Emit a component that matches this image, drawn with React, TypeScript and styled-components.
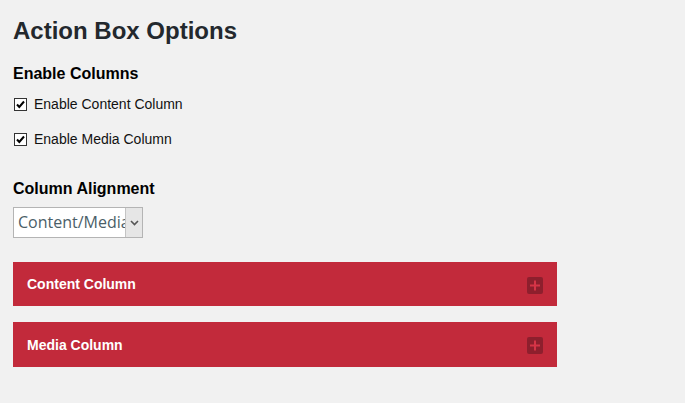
import {useState} from 'react';
import styled, {createGlobalStyle} from 'styled-components';

const GlobalStyle = createGlobalStyle`
  html, body {
    margin: 0;
    padding: 0;
    background: #f1f1f1;
  }
  body {
    font-family: "Liberation Sans", Arial, sans-serif;
    color: #23282d;
  }
`;

function App() {
    const [content, setContent] = useState(true);
    const [media, setMedia] = useState(true);

    return (
        <>
            <GlobalStyle/>
            <Page>
                <Title>Action Box Options</Title>

                <SectionTitle>Enable Columns</SectionTitle>
                <CheckRow>
                    <Check type="checkbox" checked={content} onChange={() => setContent(!content)}/>
                    <CheckLabel>Enable Content Column</CheckLabel>
                </CheckRow>
                <CheckRow>
                    <Check type="checkbox" checked={media} onChange={() => setMedia(!media)}/>
                    <CheckLabel>Enable Media Column</CheckLabel>
                </CheckRow>

                <SectionTitle $top={15}>Column Alignment</SectionTitle>
                <Select>
                    <SelectValue>Content/Media</SelectValue>
                    <SelectArrow>
                        <svg width="9" height="6" viewBox="0 0 9 6">
                            <path d="M1 1 L4.5 4.5 L8 1" fill="none" stroke="#555" strokeWidth="1.6"/>
                        </svg>
                    </SelectArrow>
                </Select>

                <Panels>
                    <Panel>
                        <PanelTitle>Content Column</PanelTitle>
                        <PlusIcon/>
                    </Panel>
                    <Panel $height={45}>
                        <PanelTitle>Media Column</PanelTitle>
                        <PlusIcon/>
                    </Panel>
                </Panels>
            </Page>
        </>
    );
}

export default App;


const PlusIcon = () => (
    <PlusBox>
        <svg width="16" height="17" viewBox="0 0 16 17">
            <path d="M8 3.5 V13.5 M3 8.5 H13" stroke="#d63447" strokeWidth="2"/>
        </svg>
    </PlusBox>
);


const checkMark = encodeURIComponent(
    '<svg xmlns="http://www.w3.org/2000/svg" width="11" height="11" viewBox="0 0 11 11">' +
    '<path d="M2 5.5 L4.3 8 L9 2.5" fill="none" stroke="#000" stroke-width="2"/></svg>'
);


const Page = styled.div`
  display: flex;
  flex-direction: column;
  align-items: flex-start;
  padding: 17px 13px 0 13px;
  width: 544px;
`;

const Title = styled.h1`
  margin: 0 0 19px 0;
  font-size: 24px;
  line-height: 28px;
  font-weight: bold;
  color: #23282d;
`;

const SectionTitle = styled.h3<{$top?: number}>`
  margin: ${p => p.$top || 0}px 0 10px 0;
  font-size: 16px;
  line-height: 20px;
  font-weight: bold;
  color: #000;
`;

const CheckRow = styled.label`
  display: flex;
  align-items: center;
  height: 20px;
  margin-bottom: 15px;
`;

const Check = styled.input`
  appearance: none;
  box-sizing: border-box;
  width: 13px;
  height: 13px;
  margin: 0 7px 0 1px;
  border: 1px solid #333;
  background: #fff center / 11px 11px no-repeat;

  &:checked {
    background-image: url("data:image/svg+xml,${checkMark}");
  }
`;

const CheckLabel = styled.span`
  font-size: 14px;
  color: #111;
`;

const Select = styled.div`
  display: flex;
  width: 128px;
  height: 29px;
  border: 1px solid #b4b4b4;
  background: #fff;
  margin-top: -2px;
`;

const SelectValue = styled.div`
  flex: 1;
  overflow: hidden;
  white-space: nowrap;
  padding-left: 4px;
  font-family: "Open Sans", "Noto Sans", sans-serif;
  font-size: 16px;
  line-height: 29px;
  color: #4b5e68;
`;

const SelectArrow = styled.div`
  flex: none;
  width: 16px;
  display: flex;
  align-items: center;
  justify-content: center;
  background: #e6e6e6;
  border-left: 1px solid #c4c4c4;
`;

const Panels = styled.div`
  display: flex;
  flex-direction: column;
  align-self: stretch;
  gap: 16px;
  margin-top: 24px;
`;

const Panel = styled.div<{$height?: number}>`
  display: flex;
  align-items: center;
  justify-content: space-between;
  height: ${p => p.$height || 44}px;
  padding: 0 14px;
  background: #c22a3b;
`;

const PanelTitle = styled.div`
  font-size: 14px;
  font-weight: bold;
  color: #fff;
`;

const PlusBox = styled.div`
  display: flex;
  width: 16px;
  height: 17px;
  border-radius: 2px;
  background: #8e1f2d;
  margin-top: 2px;
`;
